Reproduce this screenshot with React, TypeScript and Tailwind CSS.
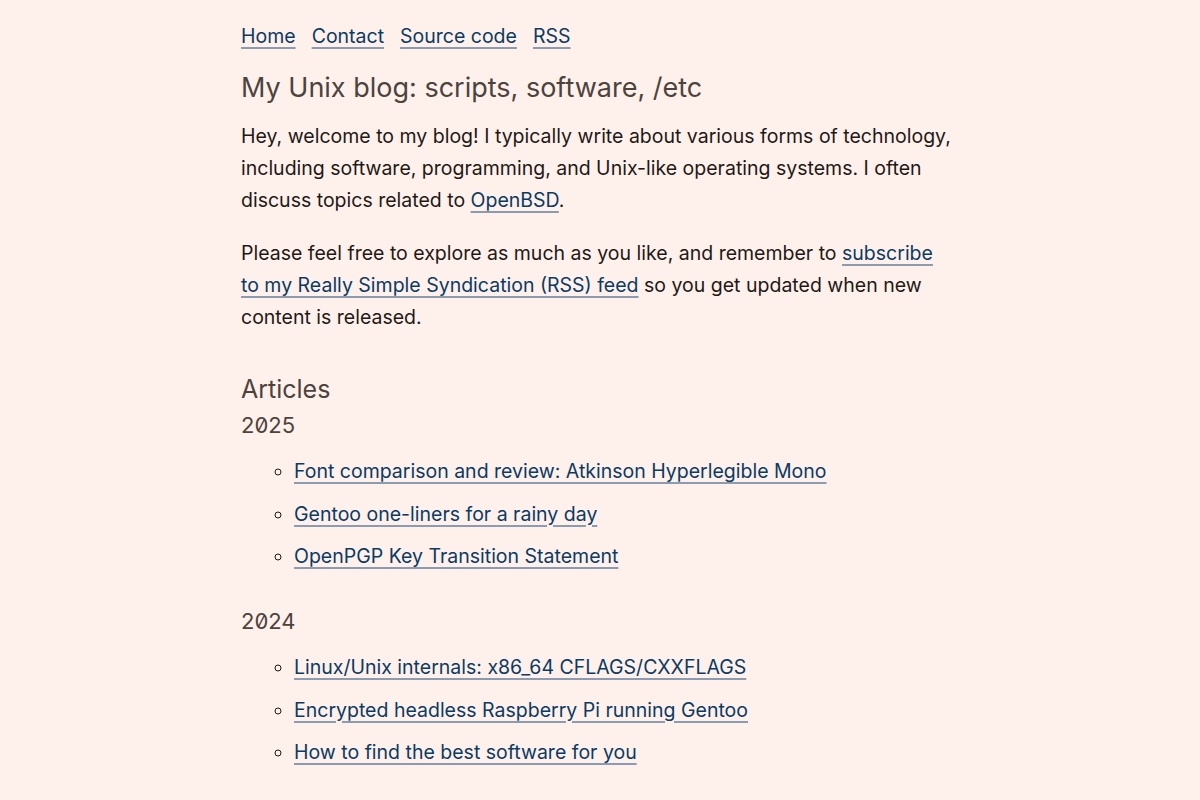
import React from "react";

const link =
  "text-[#0b3a63] underline decoration-[#8b9bb0] decoration-2 underline-offset-[4px]";

const years: { year: string; posts: string[] }[] = [
  {
    year: "2025",
    posts: [
      "Font comparison and review: Atkinson Hyperlegible Mono",
      "Gentoo one-liners for a rainy day",
      "OpenPGP Key Transition Statement",
    ],
  },
  {
    year: "2024",
    posts: [
      "Linux/Unix internals: x86_64 CFLAGS/CXXFLAGS",
      "Encrypted headless Raspberry Pi running Gentoo",
      "How to find the best software for you",
    ],
  },
];

export default function App() {
  return (
    <div className="min-h-screen bg-[#fef1eb] text-[#1e1916] font-['Inter','Noto_Sans',sans-serif]">
      <div className="mx-auto w-[720px] pl-px pt-[22px]">
        <div className="max-w-[712px]">
          <nav className="flex gap-4 text-[19.5px] leading-[28px]">
            <a className={link} href="#">Home</a>
            <a className={link} href="#">Contact</a>
            <a className={link} href="#">Source code</a>
            <a className={link} href="#">RSS</a>
          </nav>
          <h1 className="mt-[20px] text-[27px] leading-[36px] text-[#4d433d]">
            My Unix blog: scripts, software, /etc
          </h1>
          <p className="mt-[14px] text-[19.5px] leading-[32px]">
            Hey, welcome to my blog! I typically write about various forms of
            technology, including software, programming, and Unix-like operating
            systems. I often discuss topics related to{" "}
            <a className={link} href="#">OpenBSD</a>.
          </p>
          <p className="mt-[21px] text-[19.5px] leading-[32px]">
            Please feel free to explore as much as you like, and remember to{" "}
            <a className={link} href="#">
              subscribe to my Really Simple Syndication (RSS) feed
            </a>{" "}
            so you get updated when new content is released.
          </p>
          <h2 className="mt-[39px] text-[25px] leading-[34px] text-[#4d433d]">
            Articles
          </h2>
          {years.map((y, i) => (
            <section key={y.year} className={i === 0 ? "mt-[3px]" : "mt-[33px]"}>
              <h3 className="text-[22px] leading-[32px] text-[#4d433d] [font-feature-settings:'zero']">
                {y.year}
              </h3>
              <ul className="mt-[14px] flex flex-col gap-[10.5px] pl-[53px] list-[circle] text-[19.5px] leading-[32px] marker:text-[#1e1916]">
                {y.posts.map((p) => (
                  <li key={p}>
                    <a className={link} href="#">{p}</a>
                  </li>
                ))}
              </ul>
            </section>
          ))}
        </div>
      </div>
    </div>
  );
}
